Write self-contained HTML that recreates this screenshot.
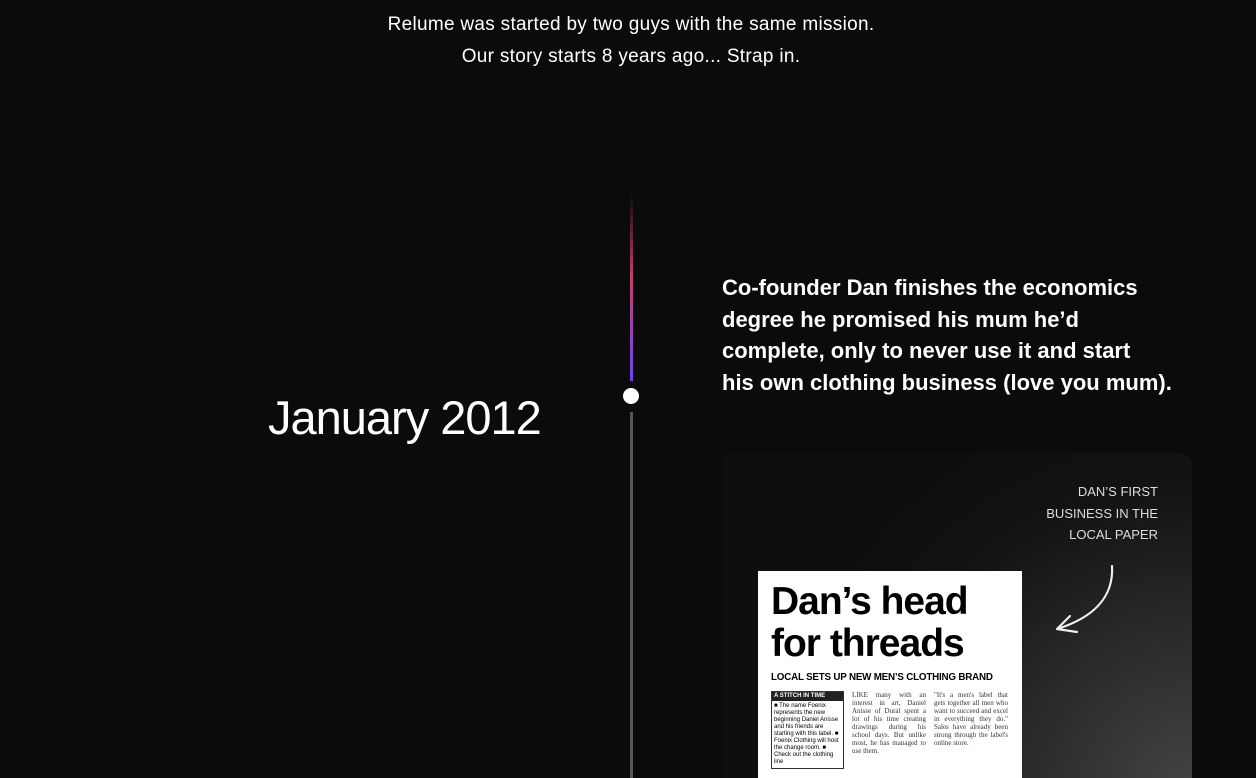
<!DOCTYPE html>
<html style="width:1256px;height:778px;overflow:hidden"><head><style>
*{margin:0;padding:0;box-sizing:border-box}
body{width:1256px;height:778px;background:#0b0b0b;overflow:hidden;position:relative;font-family:"Liberation Sans",sans-serif;color:#fff}
.a{position:absolute}
.intro{left:0;width:1262px;text-align:center;font-size:19px;line-height:32px;top:9px;letter-spacing:0.3px}
.n{font-family:"Liberation Serif",serif;color:#333;font-size:7px;line-height:8px;text-align:justify}
</style></head><body>
<div class="a intro">Relume was started by two guys with the same mission.<br>Our story starts 8 years ago... Strap in.</div>
<div class="a" style="left:630px;top:193px;width:3px;height:188px;background:linear-gradient(#0b0b0b,#c43f6e 45%,#6a44f5 100%)"></div>
<div class="a" style="left:623px;top:388px;width:16px;height:16px;border-radius:50%;background:#fff"></div>
<div class="a" style="left:630px;top:412px;width:3px;height:366px;background:#555"></div>
<div class="a" style="left:268px;top:390px;font-size:47px;letter-spacing:-1px">January 2012</div>
<div class="a" style="left:722px;top:272px;width:480px;font-size:22px;line-height:31.5px;font-weight:bold;white-space:nowrap">Co-founder Dan finishes the economics<br>degree he promised his mum he’d<br>complete, only to never use it and start<br>his own clothing business (love you mum).</div>
<div class="a" style="left:722px;top:453px;width:470px;height:340px;border-radius:12px;overflow:hidden;background:radial-gradient(ellipse 90% 120% at 100% 100%,#444,#2a2a2a 40%,#131313 75%,#0e0e0e)">
 <div class="a" style="right:34px;top:28px;text-align:right;font-size:13px;line-height:21.5px;color:#ddd">DAN’S FIRST<br>BUSINESS IN THE<br>LOCAL PAPER</div>
 <svg class="a" style="left:330px;top:110px" width="70" height="75"><path d="M60 3 C62 35 40 55 5 66 M5 66 L18 53 M5 66 L25 69" stroke="#eee" stroke-width="2.2" fill="none" stroke-linecap="round"/></svg>
 <div class="a" style="left:36px;top:118px;width:264px;height:230px;background:#fff;color:#000;padding:10px 13px">
  <div style="font-weight:bold;font-size:39px;line-height:42px;letter-spacing:-1px">Dan’s head<br>for threads</div>
  <div style="font-weight:bold;font-size:9.8px;margin-top:7px;letter-spacing:-0.2px;white-space:nowrap">LOCAL SETS UP NEW MEN’S CLOTHING BRAND</div>
  <div style="display:flex;gap:8px;margin-top:8px">
   <div style="width:73px;border:1px solid #333;font-size:6px;line-height:7px"><div style="background:#222;color:#fff;font-weight:bold;padding:1px 2px">A STITCH IN TIME</div><div style="padding:2px">■ The name Foenix represents the new beginning Daniel Anisse and his friends are starting with this label. ■ Foenix Clothing will host the change room. ■ Check out the clothing line</div></div>
   <div class="n" style="width:74px">LIKE many with an interest in art, Daniel Anisse of Dural spent a lot of his time creating drawings during his school days. But unlike most, he has managed to use them.</div>
   <div class="n" style="width:74px">"It's a men's label that gets together all men who want to succeed and excel in everything they do." Sales have already been strong through the label's online store.</div>
  </div>
 </div>
</div>
</body></html>
